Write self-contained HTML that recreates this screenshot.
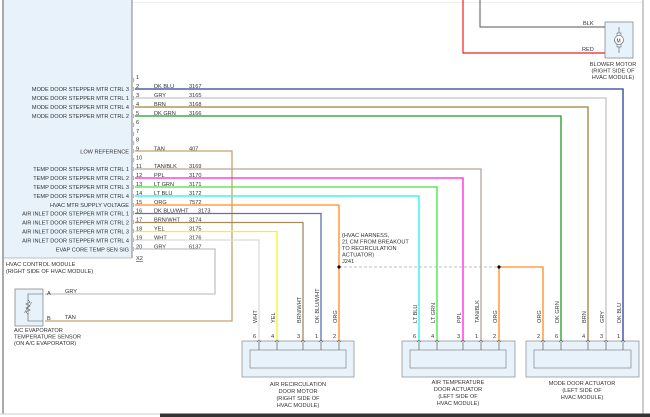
<!DOCTYPE html>
<html><head><meta charset="utf-8"><style>
html,body{margin:0;padding:0;background:#fff;}
svg{display:block;font-family:"Liberation Sans",sans-serif;}
text{font-size:5.6px;fill:#333;}
</style></head><body>
<svg width="650" height="417" viewBox="0 0 650 417" xmlns="http://www.w3.org/2000/svg">
<rect width="650" height="417" fill="#fff"/>
<!-- frame -->
<line x1="3" y1="0" x2="3" y2="414" stroke="#555" stroke-width="1"/>
<line x1="130" y1="2.5" x2="643" y2="2.5" stroke="#eee" stroke-width="1"/>
<line x1="643" y1="0" x2="643" y2="414" stroke="#999" stroke-width="1"/>
<line x1="0" y1="414" x2="200" y2="414" stroke="#ccc" stroke-width="1"/>
<rect x="160" y="413.5" width="490" height="4" fill="#333"/>
<!-- module -->
<rect x="4" y="0" width="128" height="258" fill="#e7f2fb"/>
<line x1="132" y1="0" x2="132" y2="258" stroke="#666" stroke-width="0.8"/>
<line x1="4" y1="258" x2="132" y2="258" stroke="#888" stroke-width="0.6"/>
<text x="6" y="266">HVAC CONTROL MODULE</text>
<text x="6" y="273">(RIGHT SIDE OF HVAC MODULE)</text>
<text x="136" y="260" style="text-decoration:underline">X2</text>
<g text-anchor="end">
<text x="129" y="91">MODE DOOR STEPPER MTR CTRL 3</text>
<text x="129" y="100">MODE DOOR STEPPER MTR CTRL 1</text>
<text x="129" y="109">MODE DOOR STEPPER MTR CTRL 4</text>
<text x="129" y="118">MODE DOOR STEPPER MTR CTRL 2</text>
<text x="129" y="153.5">LOW REFERENCE</text>
<text x="129" y="171">TEMP DOOR STEPPER MTR CTRL 1</text>
<text x="129" y="180">TEMP DOOR STEPPER MTR CTRL 2</text>
<text x="129" y="189">TEMP DOOR STEPPER MTR CTRL 3</text>
<text x="129" y="198">TEMP DOOR STEPPER MTR CTRL 4</text>
<text x="129" y="207">HVAC MTR SUPPLY VOLTAGE</text>
<text x="129" y="215.5">AIR INLET DOOR STEPPER MTR CTRL 1</text>
<text x="129" y="224.5">AIR INLET DOOR STEPPER MTR CTRL 2</text>
<text x="129" y="233.5">AIR INLET DOOR STEPPER MTR CTRL 3</text>
<text x="129" y="242.5">AIR INLET DOOR STEPPER MTR CTRL 4</text>
<text x="129" y="251.5">EVAP CORE TEMP SEN SIG</text>
</g>
<!-- pin numbers & connectors -->
<g>
<text x="136" y="79">1</text><text x="136" y="88">2</text><text x="136" y="97">3</text><text x="136" y="106">4</text><text x="136" y="115">5</text>
<text x="136" y="124">6</text><text x="136" y="133">7</text><text x="136" y="141.5">8</text><text x="136" y="150.5">9</text><text x="136" y="159.5">10</text>
<text x="136" y="168">11</text><text x="136" y="177">12</text><text x="136" y="186">13</text><text x="136" y="195">14</text><text x="136" y="204">15</text>
<text x="136" y="212.5">16</text><text x="136" y="221.5">17</text><text x="136" y="230.5">18</text><text x="136" y="239.5">19</text><text x="136" y="248.5">20</text>
</g>
<g fill="none" stroke="#555" stroke-width="0.5">
<path d="M133 78 q2 2 0 4 M133 87 q2 2 0 4 M133 96 q2 2 0 4 M133 105 q2 2 0 4 M133 114 q2 2 0 4 M133 123 q2 2 0 4 M133 132 q2 2 0 4 M133 141 q2 2 0 4 M133 149 q2 2 0 4 M133 158 q2 2 0 4 M133 167 q2 2 0 4 M133 176 q2 2 0 4 M133 185 q2 2 0 4 M133 194 q2 2 0 4 M133 203 q2 2 0 4 M133 211 q2 2 0 4 M133 220 q2 2 0 4 M133 229 q2 2 0 4 M133 238 q2 2 0 4 M133 247 q2 2 0 4"/>
</g>
<!-- color codes -->
<text x="154" y="88">DK BLU</text><text x="189" y="88">3167</text>
<text x="154" y="97">GRY</text><text x="189" y="97">3165</text>
<text x="154" y="106">BRN</text><text x="189" y="106">3168</text>
<text x="154" y="115">DK GRN</text><text x="189" y="115">3166</text>
<text x="154" y="150.5">TAN</text><text x="189" y="150.5">407</text>
<text x="154" y="168">TAN/BLK</text><text x="189" y="168">3169</text>
<text x="154" y="177">PPL</text><text x="189" y="177">3170</text>
<text x="154" y="186">LT GRN</text><text x="189" y="186">3171</text>
<text x="154" y="195">LT BLU</text><text x="189" y="195">3172</text>
<text x="154" y="204">ORG</text><text x="189" y="204">7572</text>
<text x="154" y="212.5">DK BLU/WHT</text><text x="198" y="212.5">3173</text>
<text x="154" y="221.5">BRN/WHT</text><text x="189" y="221.5">3174</text>
<text x="154" y="230.5">YEL</text><text x="189" y="230.5">3175</text>
<text x="154" y="239.5">WHT</text><text x="189" y="239.5">3176</text>
<text x="154" y="248.5">GRY</text><text x="189" y="248.5">6137</text>
<!-- wires -->
<g fill="none" stroke-width="1.3">
<path d="M135 89 H623 V341" stroke="#2b3f9e"/>
<path d="M135 98 H606 V341" stroke="#c4c4c4"/>
<path d="M135 107 H588 V341" stroke="#a0813c"/>
<path d="M135 116 H561 V341" stroke="#1f9a2a"/>
<path d="M135 151 H232 V321 H45" stroke="#c4a56a"/>
<path d="M135 169 H481 V341" stroke="#b3a89a"/>
<path d="M135 178 H463 V341" stroke="#ff1fe0"/>
<path d="M135 187 H437 V341" stroke="#3de83d"/>
<path d="M135 196 H419 V341" stroke="#22f0f0"/>
<path d="M135 205 H339 V341" stroke="#ff8c1f"/>
<path d="M499 341 V267 H543 V341" stroke="#ff8c1f"/>
<path d="M135 213.5 H321 V341" stroke="#5a70b8"/>
<path d="M135 222.5 H303 V341" stroke="#a38a60"/>
<path d="M135 231.5 H277 V341" stroke="#f5f51a"/>
<path d="M135 240 H259 V341" stroke="#dcdcdc"/>
<path d="M135 249 H215 V294 H45" stroke="#c4c4c4"/>
</g>
<line x1="339" y1="267" x2="499" y2="267" stroke="#aaa" stroke-width="0.7" stroke-dasharray="3,2"/>
<circle cx="339" cy="267" r="1.6" fill="#000"/><circle cx="499" cy="267" r="1.6" fill="#000"/>
<text x="342" y="237">(HVAC HARNESS,</text>
<text x="342" y="243.5">21 CM FROM BREAKOUT</text>
<text x="342" y="250">TO RECIRCULATION</text>
<text x="342" y="256.5">ACTUATOR)</text>
<text x="342" y="263">J241</text>
<!-- blower -->
<path d="M480 0 V27 H605" fill="none" stroke="#555" stroke-width="1"/>
<path d="M463 0 V53 H605" fill="none" stroke="#f21d1d" stroke-width="1.2"/>
<text x="583" y="25">BLK</text><text x="582" y="51">RED</text>
<rect x="605" y="22" width="28" height="36" fill="#e7f2fb" stroke="#666" stroke-width="0.6"/>
<path d="M619 27 V33 M619 47 V53" stroke="#555" stroke-width="0.6"/>
<rect x="617" y="33" width="4" height="3" fill="none" stroke="#555" stroke-width="0.5"/>
<rect x="617" y="44" width="4" height="3" fill="none" stroke="#555" stroke-width="0.5"/>
<circle cx="619" cy="40" r="4.5" fill="#fff" stroke="#555" stroke-width="0.6"/>
<text x="616.5" y="42.3" style="font-size:5px">M</text>
<g text-anchor="middle"><text x="613" y="66">BLOWER MOTOR</text><text x="613" y="72.5">(RIGHT SIDE OF</text><text x="613" y="79">HVAC MODULE)</text></g>
<!-- sensor -->
<rect x="15" y="289" width="28" height="37" fill="#e7f2fb" stroke="#666" stroke-width="0.6"/>
<path d="M43 294 H28 V321 H43" fill="none" stroke="#555" stroke-width="0.6"/>
<path d="M28 300 l2 2 -4 2 4 2 -4 2 4 2 -4 2 2 2" fill="#e7f2fb" stroke="#555" stroke-width="0.6"/>
<path d="M24 313 L32 302" stroke="#555" stroke-width="0.5"/>
<text x="47" y="295">A</text><text x="47" y="320">B</text>
<text x="65" y="293">GRY</text><text x="65" y="319">TAN</text>
<text x="14" y="332">A/C EVAPORATOR</text>
<text x="14" y="338.5">TEMPERATURE SENSOR</text>
<text x="14" y="345">(ON A/C EVAPORATOR)</text>
<!-- actuator boxes -->
<g fill="#e7f2fb" stroke="#888" stroke-width="0.7">
<rect x="242" y="341" width="112" height="36"/><rect x="250" y="350" width="96" height="18"/>
<rect x="402" y="341" width="113" height="36"/><rect x="410" y="350" width="96" height="18"/>
<rect x="526" y="341" width="113" height="36"/><rect x="534" y="350" width="97" height="18"/>
</g>
<g fill="none" stroke="#444" stroke-width="0.6">
<path d="M259 342 V350 M277 342 V350 M303 342 V350 M321 342 V350 M339 342 V350 M419 342 V350 M437 342 V350 M463 342 V350 M481 342 V350 M499 342 V350 M543 342 V350 M561 342 V350 M588 342 V350 M606 342 V350 M623 342 V350"/>
<path d="M257 342 q2 -3 4 0 M275 342 q2 -3 4 0 M301 342 q2 -3 4 0 M319 342 q2 -3 4 0 M337 342 q2 -3 4 0 M417 342 q2 -3 4 0 M435 342 q2 -3 4 0 M461 342 q2 -3 4 0 M479 342 q2 -3 4 0 M497 342 q2 -3 4 0 M541 342 q2 -3 4 0 M559 342 q2 -3 4 0 M586 342 q2 -3 4 0 M604 342 q2 -3 4 0 M621 342 q2 -3 4 0"/>
</g>
<g style="font-size:4.5px">
<text x="253" y="338">6</text><text x="271" y="338">4</text><text x="297" y="338">3</text><text x="315" y="338">1</text><text x="333" y="338">2</text>
<text x="413" y="338">6</text><text x="431" y="338">4</text><text x="457" y="338">3</text><text x="475" y="338">1</text><text x="493" y="338">2</text>
<text x="537" y="338">2</text><text x="555" y="338">6</text><text x="582" y="338">4</text><text x="600" y="338">3</text><text x="617" y="338">1</text>
</g>
<g>
<text transform="translate(257,323) rotate(-90)">WHT</text>
<text transform="translate(275,323) rotate(-90)">YEL</text>
<text transform="translate(301,323) rotate(-90)">BRN/WHT</text>
<text transform="translate(319,323) rotate(-90)">DK BLU/WHT</text>
<text transform="translate(337,323) rotate(-90)">ORG</text>
<text transform="translate(417,323) rotate(-90)">LT BLU</text>
<text transform="translate(435,323) rotate(-90)">LT GRN</text>
<text transform="translate(461,323) rotate(-90)">PPL</text>
<text transform="translate(479,323) rotate(-90)">TAN/BLK</text>
<text transform="translate(497,323) rotate(-90)">ORG</text>
<text transform="translate(541,323) rotate(-90)">ORG</text>
<text transform="translate(559,323) rotate(-90)">DK GRN</text>
<text transform="translate(586,323) rotate(-90)">BRN</text>
<text transform="translate(604,323) rotate(-90)">GRY</text>
<text transform="translate(621,323) rotate(-90)">DK BLU</text>
</g>
<g text-anchor="middle">
<text x="298" y="386">AIR RECIRCULATION</text><text x="298" y="393">DOOR MOTOR</text><text x="298" y="400">(RIGHT SIDE OF</text><text x="298" y="407">HVAC MODULE)</text>
<text x="458" y="384">AIR TEMPERATURE</text><text x="458" y="391">DOOR ACTUATOR</text><text x="458" y="398">(LEFT SIDE OF</text><text x="458" y="405">HVAC MODULE)</text>
<text x="582" y="385">MODE DOOR ACTUATOR</text><text x="582" y="392">(LEFT SIDE OF</text><text x="582" y="399">HVAC MODULE)</text>
</g>
</svg>
</body></html>
